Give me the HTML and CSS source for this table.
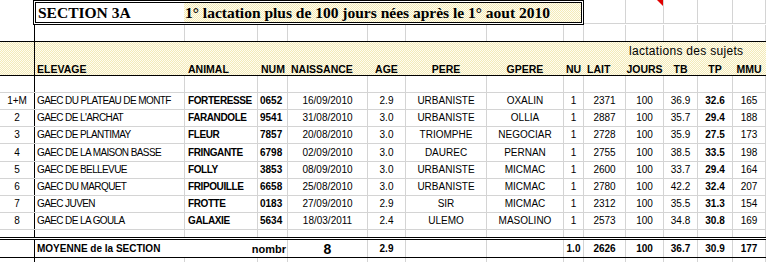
FILE: index.html
```html
<!DOCTYPE html>
<html lang="fr">
<head>
<meta charset="utf-8">
<title>Section 3A</title>
<link rel="stylesheet" href="styles.css">
</head>
<body>
<div class="sheet">
  <div class="title-row">
    <div class="corner"></div>
    <div class="title-box">
      <div class="title-left">SECTION 3A</div>
      <div class="title-right">1° lactation plus de 100 jours nées après le 1° aout 2010</div>
    </div>
    <div class="tcell w42"></div>
    <div class="tcell w38 comment"><span class="flag"></span></div>
    <div class="tcell w34"></div>
    <div class="tcell w35"></div>
    <div class="tcell w33"></div>
  </div>

  <div class="row r2">
    <div></div><div></div><div></div><div></div><div></div><div></div><div></div>
    <div></div><div></div><div></div><div></div><div></div><div></div><div></div>
  </div>

  <div class="header">
    <div class="row hrow1">
      <div></div><div></div><div></div><div></div><div></div><div></div><div></div>
      <div></div><div></div><div></div><div class="l3 over lact">lactations des sujets</div><div></div><div></div><div></div>
    </div>
    <div class="row hrow2">
      <div></div>
      <div class="l2">ELEVAGE</div>
      <div class="l3">ANIMAL</div>
      <div class="l3">NUM</div>
      <div class="l3">NAISSANCE</div>
      <div>AGE</div>
      <div>PERE</div>
      <div>GPERE</div>
      <div>NU</div>
      <div class="l3">LAIT</div>
      <div>JOURS</div>
      <div>TB</div>
      <div>TP</div>
      <div>MMU</div>
    </div>
  </div>

  <div class="row data">
    <div></div><div></div><div></div><div></div><div></div><div></div><div></div>
    <div></div><div></div><div></div><div></div><div></div><div></div><div></div>
  </div>

  <div class="row data">
    <div>1+M</div><div class="l2 elev">GAEC DU PLATEAU DE MONTF</div><div class="l3 b anim">FORTERESSE</div><div class="l2 b">0652</div><div>16/09/2010</div><div>2.9</div><div>URBANISTE</div><div>OXALIN</div><div>1</div><div>2371</div><div>100</div><div>36.9</div><div class="b">32.6</div><div>165</div>
  </div>
  <div class="row data">
    <div>2</div><div class="l2 elev">GAEC DE L'ARCHAT</div><div class="l3 b anim">FARANDOLE</div><div class="l2 b">9541</div><div>31/08/2010</div><div>3.0</div><div>URBANISTE</div><div>OLLIA</div><div>1</div><div>2887</div><div>100</div><div>35.7</div><div class="b">29.4</div><div>188</div>
  </div>
  <div class="row data">
    <div>3</div><div class="l2 elev">GAEC DE PLANTIMAY</div><div class="l3 b anim">FLEUR</div><div class="l2 b">7857</div><div>20/08/2010</div><div>3.0</div><div>TRIOMPHE</div><div>NEGOCIAR</div><div>1</div><div>2728</div><div>100</div><div>35.9</div><div class="b">27.5</div><div>173</div>
  </div>
  <div class="row data tall">
    <div>4</div><div class="l2 elev">GAEC DE LA MAISON BASSE</div><div class="l3 b anim">FRINGANTE</div><div class="l2 b">6798</div><div>02/09/2010</div><div>3.0</div><div>DAUREC</div><div>PERNAN</div><div>1</div><div>2755</div><div>100</div><div>38.5</div><div class="b">33.5</div><div>198</div>
  </div>
  <div class="row data">
    <div>5</div><div class="l2 elev">GAEC DE BELLEVUE</div><div class="l3 b anim">FOLLY</div><div class="l2 b">3853</div><div>08/09/2010</div><div>3.0</div><div>URBANISTE</div><div>MICMAC</div><div>1</div><div>2600</div><div>100</div><div>33.7</div><div class="b">29.4</div><div>164</div>
  </div>
  <div class="row data">
    <div>6</div><div class="l2 elev">GAEC DU MARQUET</div><div class="l3 b anim">FRIPOUILLE</div><div class="l2 b">6658</div><div>25/08/2010</div><div>3.0</div><div>URBANISTE</div><div>MICMAC</div><div>1</div><div>2780</div><div>100</div><div>42.2</div><div class="b">32.4</div><div>207</div>
  </div>
  <div class="row data">
    <div>7</div><div class="l2 elev">GAEC JUVEN</div><div class="l3 b anim">FROTTE</div><div class="l2 b">0183</div><div>27/09/2010</div><div>2.9</div><div>SIR</div><div>MICMAC</div><div>1</div><div>2312</div><div>100</div><div>35.5</div><div class="b">31.3</div><div>154</div>
  </div>
  <div class="row data">
    <div>8</div><div class="l2 elev">GAEC DE LA GOULA</div><div class="l3 b anim">GALAXIE</div><div class="l2 b">5634</div><div>18/03/2011</div><div>2.4</div><div>ULEMO</div><div>MASOLINO</div><div>1</div><div>2573</div><div>100</div><div>34.8</div><div class="b">30.8</div><div>169</div>
  </div>

  <div class="row gap">
    <div></div><div></div><div></div><div></div><div></div><div></div><div></div>
    <div></div><div></div><div></div><div></div><div></div><div></div><div></div>
  </div>

  <div class="row total">
    <div></div>
    <div class="l2 b nogrid">MOYENNE de la SECTION</div>
    <div class="nogrid"></div>
    <div class="r1 b over nombr">nombr</div>
    <div class="big">8</div>
    <div class="b">2.9</div>
    <div></div>
    <div></div>
    <div class="b">1.0</div>
    <div class="b">2626</div>
    <div class="b">100</div>
    <div class="b">36.7</div>
    <div class="b">30.9</div>
    <div class="b">177</div>
  </div>

  <div class="row tail">
    <div></div><div></div><div></div><div></div><div></div><div></div><div></div>
    <div></div><div></div><div></div><div></div><div></div><div></div><div></div>
  </div>
</div>
</body>
</html>
```

FILE: styles.css
```css
html, body {
  margin: 0;
  padding: 0;
  background: #ffffff;
}

body {
  font-family: "Liberation Sans", Arial, sans-serif;
  font-size: 10px;
  color: #000000;
  overflow: hidden;
}

.sheet {
  width: 766px;
  height: 262px;
  overflow: hidden;
}

/* excel-like yellow pattern fill */
.title-right,
.header {
  background-color: #fffbe4;
  background-image: repeating-conic-gradient(#f3eab8 0 25%, #fffdf0 0 50%);
  background-size: 2px 2px;
}

/* ---------- title row ---------- */
.title-row {
  display: flex;
  height: 25px;
}

.corner {
  width: 33px;
  flex: none;
}

.title-box {
  width: 551px;
  flex: none;
  box-sizing: border-box;
  border: 3px double #000000;
  display: flex;
  font-family: "Liberation Serif", "Times New Roman", serif;
  font-weight: bold;
  font-size: 15.5px;
  line-height: 19px;
  white-space: nowrap;
}

.title-left {
  width: 148px;
  flex: none;
  box-sizing: border-box;
  padding-left: 2px;
  background: #ffffff;
}

.title-right {
  flex: 1;
  padding-left: 1px;
  overflow: hidden;
}

.tcell {
  flex: none;
  height: 24px;
  box-sizing: border-box;
  border-right: 1px solid #d4d4d4;
  border-bottom: 1px solid #d4d4d4;
}

.w42 { width: 42px; }
.w38 { width: 38px; }
.w34 { width: 34px; }
.w35 { width: 35px; }
.w33 { width: 33px; }

.comment {
  position: relative;
}

.flag {
  position: absolute;
  top: 0;
  right: 0;
  width: 6px;
  height: 6px;
  background: #e00000;
  clip-path: polygon(0 0, 100% 0, 100% 100%);
}

/* ---------- grid rows ---------- */
.row {
  display: grid;
  grid-template-columns: 35px 150px 73px 30px 80px 38px 81px 77px 20px 42px 38px 34px 35px 33px;
  box-sizing: border-box;
}

.row > div {
  box-sizing: border-box;
  border-right: 1px solid #d4d4d4;
  overflow: hidden;
  white-space: nowrap;
  display: flex;
  align-items: flex-end;
  justify-content: center;
  line-height: 12px;
  padding-bottom: 2px;
}

.row > div:first-child {
  border-right-color: #000000;
}

.r2 {
  height: 16px;
}

/* ---------- header ---------- */
.header {
  border-top: 1px solid #000000;
  border-bottom: 1px solid #000000;
}

.header .row > div {
  border-right-color: transparent;
  font-weight: bold;
  font-size: 10.5px;
}

.header .row > div:first-child {
  border-right-color: #000000;
}

.hrow1 {
  height: 17px;
}

.hrow2 {
  height: 16px;
}

.hrow2 > div {
  padding-bottom: 0;
}

.header .row > .lact {
  font-weight: normal;
  font-size: 12px;
  letter-spacing: 0.3px;
}

/* ---------- data ---------- */
.data {
  height: 17px;
  border-bottom: 1px solid #d4d4d4;
}

.data.tall {
  height: 18px;
}

.elev {
  letter-spacing: -0.6px;
}

.anim {
  letter-spacing: -0.4px;
}

.gap {
  height: 7px;
}

.total {
  height: 21px;
  border-top: 3px double #000000;
  border-bottom: 1px solid #000000;
}

.total > div {
  padding-bottom: 2px;
}

.total > .nogrid {
  border-right-color: transparent;
}

.total > .big {
  font-weight: bold;
  font-size: 14px;
  line-height: 14px;
  padding-bottom: 1px;
}

.tail {
  height: 10px;
}

/* ---------- alignment helpers ---------- */
.row > .l2 {
  justify-content: flex-start;
  padding-left: 2px;
}

.row > .l3 {
  justify-content: flex-start;
  padding-left: 3px;
}

.row > .r1 {
  justify-content: flex-end;
  padding-right: 1px;
}

.row > .over {
  overflow: visible;
}

.b {
  font-weight: bold;
}

.nombr {
  font-size: 11px;
}
```
